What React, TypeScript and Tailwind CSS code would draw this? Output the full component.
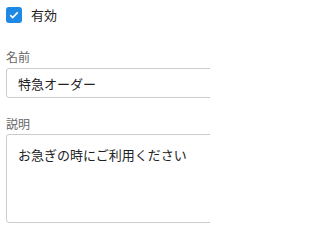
import { useState } from 'react'

export default function App() {
  const [active, setActive] = useState(true)
  const [name, setName] = useState('特急オーダー')
  const [desc, setDesc] = useState('お急ぎの時にご利用ください')

  return (
    <div
      className="w-[210px] h-[232px] overflow-hidden bg-white pl-[6px] pt-[7px] text-[#222]"
      style={{ fontFamily: '"Noto Sans CJK JP", "Noto Sans", sans-serif' }}
    >
      <label className="flex items-center gap-[9px] h-[16px] text-[13px] cursor-pointer">
        <span
          className={`flex items-center justify-center w-[16px] h-[16px] rounded-[3px] ${active ? 'bg-[#1e88e5]' : 'border border-[#999]'}`}
          onClick={() => setActive(!active)}
        >
          {active && (
            <svg viewBox="0 0 16 16" className="w-[12px] h-[12px]">
              <path d="M3 8.2l3.2 3.1L13 4.6" fill="none" stroke="#fff" strokeWidth="2.2" />
            </svg>
          )}
        </span>
        有効
      </label>

      <div className="mt-[26px] text-[12px] leading-[16px] text-[#666]">名前</div>
      <input
        value={name}
        onChange={(e) => setName(e.target.value)}
        className="mt-[3px] block w-[240px] h-[30px] rounded-[3px] border border-[#ccc] px-[11px] text-[13px] outline-none"
      />

      <div className="mt-[18px] text-[12px] leading-[16px] text-[#666]">説明</div>
      <textarea
        value={desc}
        onChange={(e) => setDesc(e.target.value)}
        className="mt-[2px] block w-[240px] h-[89px] resize-none rounded-[3px] border border-[#ccc] px-[11px] pt-[10px] text-[13px] leading-[19px] outline-none"
      />
    </div>
  )
}
